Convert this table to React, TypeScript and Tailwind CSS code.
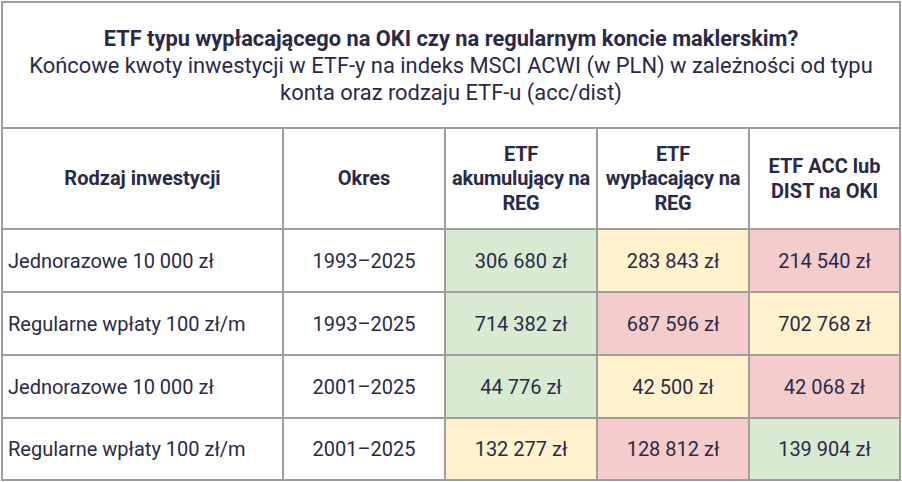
const G = "bg-[#d9ead3]";
const Y = "bg-[#fff2cc]";
const R = "bg-[#f4cccc]";

type Row = {
  name: string;
  period: string;
  values: { text: string; bg: string }[];
};

const rows: Row[] = [
  {
    name: "Jednorazowe 10 000 zł",
    period: "1993–2025",
    values: [
      { text: "306 680 zł", bg: G },
      { text: "283 843 zł", bg: Y },
      { text: "214 540 zł", bg: R },
    ],
  },
  {
    name: "Regularne wpłaty 100 zł/m",
    period: "1993–2025",
    values: [
      { text: "714 382 zł", bg: G },
      { text: "687 596 zł", bg: R },
      { text: "702 768 zł", bg: Y },
    ],
  },
  {
    name: "Jednorazowe 10 000 zł",
    period: "2001–2025",
    values: [
      { text: "44 776 zł", bg: G },
      { text: "42 500 zł", bg: Y },
      { text: "42 068 zł", bg: R },
    ],
  },
  {
    name: "Regularne wpłaty 100 zł/m",
    period: "2001–2025",
    values: [
      { text: "132 277 zł", bg: Y },
      { text: "128 812 zł", bg: R },
      { text: "139 904 zł", bg: G },
    ],
  },
];

const head =
  "bg-white flex items-center justify-center text-center font-bold text-[20px] leading-[24.5px]";

export default function App() {
  return (
    <div className="w-[902px] h-[482px] bg-white pl-[1px] pt-[1px] font-['Roboto',sans-serif] text-[#2a2a47]">
      <div className="w-[900px] bg-[#9e9e9e] p-[2px] grid grid-cols-[279px_160px_150px_150px_149px] grid-rows-[124px_99px_61px_61px_61px_60px] gap-[2px]">
        <div className="col-span-5 bg-white flex flex-col items-center justify-center px-5 text-center leading-[27px]">
          <div className="font-bold text-[21.8px]">
            ETF typu wypłacającego na OKI czy na regularnym koncie maklerskim?
          </div>
          <div className="text-[21.9px]">
            Końcowe kwoty inwestycji w ETF-y na indeks MSCI ACWI (w PLN) w
            zależności od typu konta oraz rodzaju ETF-u (acc/dist)
          </div>
        </div>

        <div className={head}>Rodzaj inwestycji</div>
        <div className={head}>Okres</div>
        <div className={`${head} tracking-[-0.2px]`}>
          ETF
          <br />
          akumulujący na
          <br />
          REG
        </div>
        <div className={`${head} tracking-[-0.2px]`}>
          ETF
          <br />
          wypłacający na
          <br />
          REG
        </div>
        <div className={head}>
          ETF ACC lub
          <br />
          DIST na OKI
        </div>

        {rows.map((r, i) => (
          <div key={i} className="contents">
            <div className="bg-white flex items-center pl-[5px] text-[20px]">
              {r.name}
            </div>
            <div className="bg-white flex items-center justify-center text-[20px]">
              {r.period}
            </div>
            {r.values.map((v, j) => (
              <div
                key={j}
                className={`${v.bg} flex items-center justify-center text-[20px]`}
              >
                {v.text}
              </div>
            ))}
          </div>
        ))}
      </div>
    </div>
  );
}
